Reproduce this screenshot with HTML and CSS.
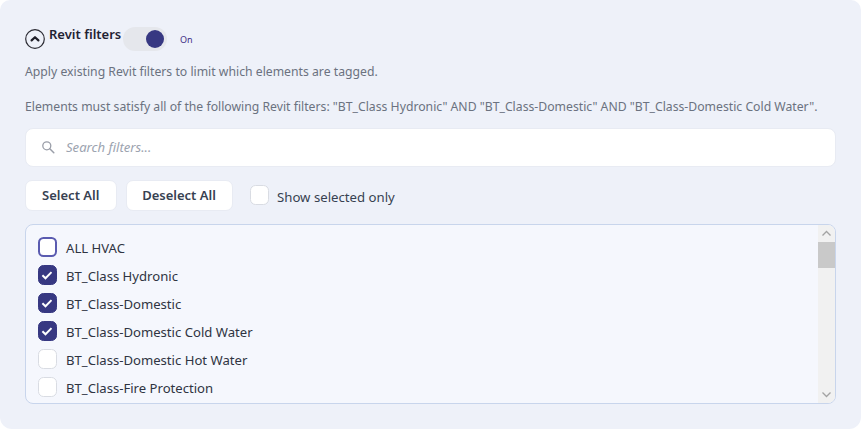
FILE: index.html
```html
<!DOCTYPE html>
<html lang="en">
<head>
<meta charset="utf-8">
<title>Revit filters</title>
<link rel="stylesheet" href="styles.css">
</head>
<body>
<section class="card">
  <header class="head">
    <button class="collapse" aria-label="Collapse">
      <svg width="20" height="20" viewBox="0 0 20 20"><circle cx="10" cy="10" r="9.3" fill="none" stroke="#2b2b33" stroke-width="1.2"/><path d="M6.6 11.4 10 8.2l3.4 3.2" fill="none" stroke="#1f1f28" stroke-width="2.2" stroke-linecap="round" stroke-linejoin="round"/></svg>
    </button>
    <h2 class="title">Revit filters</h2>
    <span class="toggle"><span class="knob"></span></span>
    <span class="state">On</span>
  </header>
  <p class="desc first">Apply existing Revit filters to limit which elements are tagged.</p>
  <p class="desc second">Elements must satisfy all of the following Revit filters: "BT_Class Hydronic" AND "BT_Class-Domestic" AND "BT_Class-Domestic Cold Water".</p>
  <div class="search">
    <svg width="14" height="14" viewBox="0 0 14 14"><circle cx="5.8" cy="5.8" r="4" fill="none" stroke="#9a9ea8" stroke-width="1.3"/><path d="m8.8 8.8 4 4" stroke="#9a9ea8" stroke-width="1.5" stroke-linecap="round"/></svg>
    <span class="placeholder">Search filters...</span>
  </div>
  <div class="actions">
    <button class="btn select">Select All</button>
    <button class="btn deselect">Deselect All</button>
    <label class="only"><span class="box"></span><span class="only-text">Show selected only</span></label>
  </div>
  <div class="list">
    <ul class="rows">
      <li class="row"><span class="box focus"></span><span class="label">ALL HVAC</span></li>
      <li class="row"><span class="box on"><svg width="20" height="20" viewBox="0 0 20 20"><path d="m5.4 10.2 3.1 3.1 6-6.2" fill="none" stroke="#fff" stroke-width="2"/></svg></span><span class="label">BT_Class Hydronic</span></li>
      <li class="row"><span class="box on"><svg width="20" height="20" viewBox="0 0 20 20"><path d="m5.4 10.2 3.1 3.1 6-6.2" fill="none" stroke="#fff" stroke-width="2"/></svg></span><span class="label">BT_Class-Domestic</span></li>
      <li class="row"><span class="box on"><svg width="20" height="20" viewBox="0 0 20 20"><path d="m5.4 10.2 3.1 3.1 6-6.2" fill="none" stroke="#fff" stroke-width="2"/></svg></span><span class="label">BT_Class-Domestic Cold Water</span></li>
      <li class="row"><span class="box"></span><span class="label">BT_Class-Domestic Hot Water</span></li>
      <li class="row"><span class="box"></span><span class="label">BT_Class-Fire Protection</span></li>
    </ul>
    <div class="scrollbar">
      <svg class="arrow" width="17" height="17" viewBox="0 0 17 17"><path d="m4.5 10.5 4-4 4 4" fill="none" stroke="#a3a3a3" stroke-width="1.3"/></svg>
      <div class="thumb"></div>
      <div class="track"></div>
      <svg class="arrow" width="17" height="17" viewBox="0 0 17 17"><path d="m4.5 6.5 4 4 4-4" fill="none" stroke="#a3a3a3" stroke-width="1.3"/></svg>
    </div>
  </div>
</section>
</body>
</html>
```
FILE: styles.css
```css
* { box-sizing: border-box; }
html, body { margin: 0; background: #fff; }
body { width: 866px; height: 439px; overflow: hidden; font-family: "Noto Sans", sans-serif; }
.card {
  width: 861px; height: 429px; background: #eef1f9;
  border-radius: 10px 10px 12px 12px;
  padding: 26px 25px 0 25px;
}
.head { display: flex; align-items: flex-start; height: 26px; }
.collapse { border: 0; background: none; padding: 0; margin-top: 3px; width: 20px; height: 20px; display: block; }
.collapse svg { display: block; }
.title { margin: 0 3px 0 4px; width: 71px; font-size: 13px; line-height: 16px; font-weight: 600; color: #1f2233; white-space: nowrap; }
.toggle { width: 44px; height: 24px; margin-top: 1px; border-radius: 12px; background: #e5e7ec; position: relative; display: block; }
.knob { position: absolute; left: 23px; top: 3px; width: 18px; height: 18px; border-radius: 50%; background: #373882; }
.state { margin: 8px 0 0 13px; font-size: 9px; line-height: 12px; color: #3f2f86; }
.desc { margin: 0; font-size: 12.23px; line-height: 16px; color: #6b7280; }
.first { margin-top: 12px; }
.second { margin-top: 19px; }
.search {
  margin-top: 13px; width: 811px; height: 39px; background: #fff; border-radius: 8px; border: 1px solid #e8ebf3;
  display: flex; align-items: center; padding: 0 0 1px 15px; gap: 11px;
}
.placeholder { font-size: 13.125px; font-style: italic; color: #9ca3af; }
.actions { margin-top: 13px; display: flex; align-items: flex-start; height: 31px; gap: 9px; }
.btn {
  height: 31px; padding: 0 0 2px; font: 600 13px "Noto Sans", sans-serif; color: #374151;
  background: #fff; border: 1px solid #e8ebf3; border-radius: 7px;
}
.select { width: 91.5px; }
.deselect { width: 107px; }
.only { display: flex; align-items: flex-start; gap: 8px; margin: 5px 0 0 8.5px; font-size: 13.2px; line-height: 20px; color: #374151; }
.only .box { width: 19px; height: 19.5px; }
.only-text { padding-top: 2px; }
.box { width: 19.5px; height: 19.5px; flex: none; display: block; background: #fff; border: 1.5px solid #d9dce3; border-radius: 5.5px; }
.box.focus { border: 2px solid #5a5bb0; }
.box.on { background: #373882; border-color: #373882; position: relative; }
.box.on svg { position: absolute; left: -1.5px; top: -1.5px; }
.list {
  margin-top: 13px; width: 811px; height: 180px; display: flex; justify-content: space-between;
  background: #f5f7fd; border: 1px solid #c8d5ec; border-radius: 8px; overflow: hidden;
}
.rows { list-style: none; margin: 0; padding: 8px 0 0 11.75px; }
.row { height: 28px; display: flex; align-items: center; gap: 8.75px; font-size: 13.125px; color: #2f3442; }
.label { padding-top: 2px; }
.scrollbar { width: 17px; height: 100%; background: #f1f1f1; display: flex; flex-direction: column; }
.arrow { display: block; flex: none; }
.thumb { height: 26px; background: #c9c9c9; flex: none; }
.track { flex: 1; }
```
